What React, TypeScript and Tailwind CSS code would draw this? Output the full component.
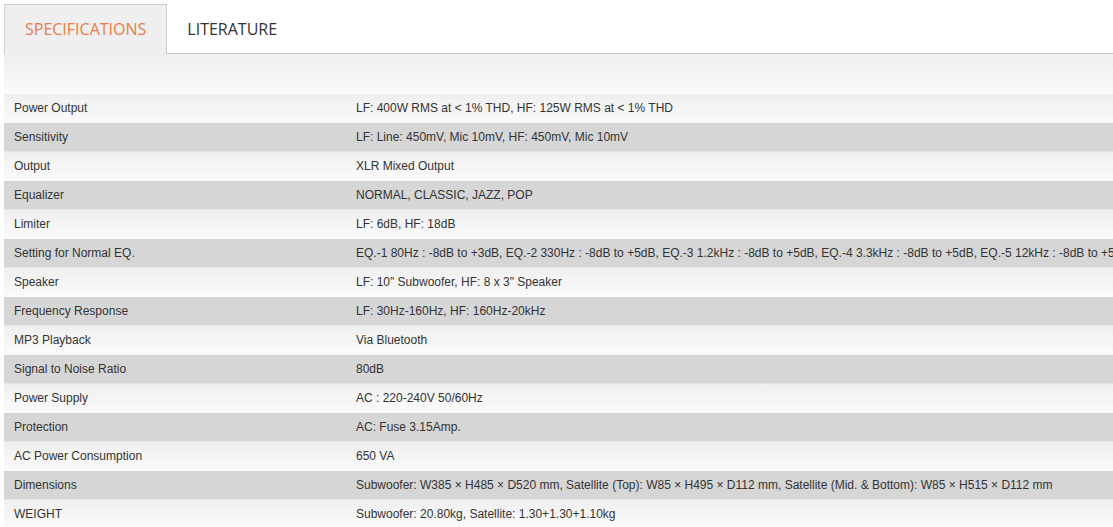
const specs: [string, string][] = [
  ['Power Output', 'LF: 400W RMS at < 1% THD, HF: 125W RMS at < 1% THD'],
  ['Sensitivity', 'LF: Line: 450mV, Mic 10mV, HF: 450mV, Mic 10mV'],
  ['Output', 'XLR Mixed Output'],
  ['Equalizer', 'NORMAL, CLASSIC, JAZZ, POP'],
  ['Limiter', 'LF: 6dB, HF: 18dB'],
  [
    'Setting for Normal EQ.',
    'EQ.-1 80Hz : -8dB to +3dB, EQ.-2 330Hz : -8dB to +5dB, EQ.-3 1.2kHz : -8dB to +5dB, EQ.-4 3.3kHz : -8dB to +5dB, EQ.-5 12kHz : -8dB to +5dB',
  ],
  ['Speaker', 'LF: 10" Subwoofer, HF: 8 x 3" Speaker'],
  ['Frequency Response', 'LF: 30Hz-160Hz, HF: 160Hz-20kHz'],
  ['MP3 Playback', 'Via Bluetooth'],
  ['Signal to Noise Ratio', '80dB'],
  ['Power Supply', 'AC : 220-240V 50/60Hz'],
  ['Protection', 'AC: Fuse 3.15Amp.'],
  ['AC Power Consumption', '650 VA'],
  [
    'Dimensions',
    'Subwoofer: W385 × H485 × D520 mm, Satellite (Top): W85 × H495 × D112 mm, Satellite (Mid. & Bottom): W85 × H515 × D112 mm',
  ],
  ['WEIGHT', 'Subwoofer: 20.80kg, Satellite: 1.30+1.30+1.10kg'],
]

export default function App() {
  return (
    <div className="h-[527px] w-[1113px] overflow-hidden bg-white pl-[4px] pt-[4px]">
      {/* Tabs */}
      <div className="flex h-[50px] font-['Open_Sans',sans-serif] text-[16px]">
        <div className="flex items-center border border-b-0 border-[#d0d0d0] bg-[#efefef] px-[20px] pb-[1px] text-[#ec7b45]">
          SPECIFICATIONS
        </div>
        <div className="flex flex-1 items-center border-b border-[#cccccc] pl-[20px] text-[#333333]">
          LITERATURE
        </div>
      </div>

      {/* Panel */}
      <div className="w-max min-w-full">
        <div className="h-[40px] bg-gradient-to-b from-[#efefef] to-[#fbfbfb]" />
        <div className="font-['Liberation_Sans',Arial,sans-serif] text-[12px] text-[#333333]">
          {specs.map(([label, value], i) => (
            <div
              key={label}
              className={
                i % 2 === 0
                  ? 'flex h-[29px] items-center whitespace-nowrap bg-gradient-to-b from-[#efefef] to-[#fbfbfb] pb-[1px]'
                  : 'flex h-[29px] items-center whitespace-nowrap border-b border-[#e4e4e4] bg-[#d6d6d6]'
              }
            >
              <div className="w-[342px] shrink-0 pl-[10px]">{label}</div>
              <div className="pl-[10px] pr-[10px]">{value}</div>
            </div>
          ))}
        </div>
      </div>
    </div>
  )
}
